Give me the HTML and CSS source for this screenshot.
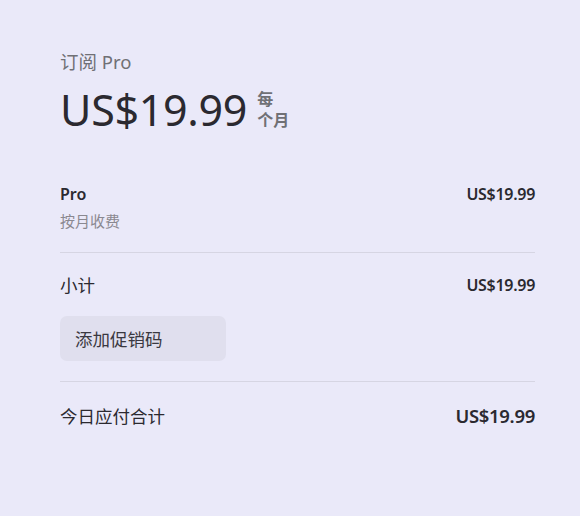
FILE: index.html
```html
<!DOCTYPE html>
<html lang="zh-CN">
<head>
<meta charset="utf-8">
<link rel="stylesheet" href="styles.css">
</head>
<body>
<main class="summary">
  <header class="head">
    <div class="title">订阅 Pro</div>
    <div class="price-line">
      <span class="price">US$19.99</span>
      <span class="period">每<br>个月</span>
    </div>
  </header>
  <section class="item">
    <div class="row">
      <span class="item-name">Pro</span>
      <span class="item-price">US$19.99</span>
    </div>
    <div class="item-sub">按月收费</div>
  </section>
  <section class="subtotal">
    <div class="row">
      <span class="label">小计</span>
      <span class="item-price">US$19.99</span>
    </div>
    <button class="promo">添加促销码</button>
  </section>
  <section class="total">
    <div class="row">
      <span class="label">今日应付合计</span>
      <span class="total-price">US$19.99</span>
    </div>
  </section>
</main>
</body>
</html>
```
FILE: styles.css
```css
html, body {
  margin: 0;
  padding: 0;
}
body {
  background: #eae9f9;
  font-family: "Noto Sans", "Noto Sans CJK SC", sans-serif;
  color: #2b2930;
  width: 580px;
  height: 516px;
}
.summary {
  padding: 50px 45px 0 60px;
  display: flex;
  flex-direction: column;
}
.title {
  font-size: 18.5px;
  color: #707075;
  line-height: 24px;
}
.price-line {
  display: flex;
  align-items: center;
  gap: 10px;
  margin-top: 8px;
}
.price {
  font-size: 43px;
  line-height: 56px;
  color: #2b2930;
  letter-spacing: -0.3px;
}
.period {
  font-size: 16px;
  font-weight: 700;
  line-height: 21px;
  color: #707075;
}
.row {
  display: flex;
  justify-content: space-between;
  align-items: center;
}
.item {
  margin-top: 44px;
  padding-bottom: 21px;
  border-bottom: 1px solid #d6d5e3;
}
.item-name {
  font-size: 16px;
  font-weight: 600;
  line-height: 24px;
}
.item-price {
  font-size: 16px;
  font-weight: 600;
  line-height: 24px;
  letter-spacing: -0.3px;
}
.item-sub {
  font-size: 15px;
  color: #8a8890;
  line-height: 20px;
  margin-top: 5px;
}
.subtotal {
  padding-top: 20px;
  padding-bottom: 20px;
  border-bottom: 1px solid #d6d5e3;
}
.label {
  font-size: 17.5px;
  line-height: 24px;
}
.promo {
  margin-top: 19px;
  width: 166px;
  height: 45px;
  border: none;
  border-radius: 7px;
  background: #e0dfee;
  font-family: inherit;
  font-size: 17.5px;
  color: #3a3840;
  text-align: left;
  padding: 0 15px;
  display: block;
}
.total {
  padding-top: 22px;
}
.total-price {
  font-size: 18.5px;
  font-weight: 600;
  line-height: 24px;
  letter-spacing: -0.3px;
}
```
